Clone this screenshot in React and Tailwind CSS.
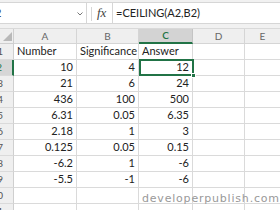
import React from "react";

const rows = [
  ["Number", "Significance", "Answer"],
  ["10", "4", "12"],
  ["21", "6", "24"],
  ["436", "100", "500"],
  ["6.31", "0.05", "6.35"],
  ["2.18", "1", "3"],
  ["0.125", "0.05", "0.15"],
  ["-6.2", "1", "-6"],
  ["-5.5", "-1", "-6"],
  ["", "", ""],
  ["", "", ""],
];

function RowHead({ n }) {
  const sel = n === 2;
  return (
    <div
      className={
        "h-[16px] flex justify-end items-center overflow-hidden pr-[10px] border-b border-[#dadada] text-[10px] " +
        (sel
          ? "bg-[#d6d6d6] text-[#217346] border-r-2 border-r-[#217346]"
          : "bg-[#efefef] text-[#555] border-r border-r-[#cfcfcf]")
      }
    >
      <span className="whitespace-nowrap">{n}</span>
    </div>
  );
}

function Cell({ v, left, w, last }) {
  return (
    <div
      className={
        "h-[16px] flex items-center whitespace-nowrap border-b border-[#dadada] " +
        (last ? "" : "border-r ") +
        (left ? "justify-start pl-[3px] " : "justify-end pr-[3px] ") +
        w
      }
    >
      {v}
    </div>
  );
}

export default function App() {
  return (
    <div
      className="w-[280px] h-[210px] overflow-hidden bg-white text-[#222] relative"
      style={{ fontFamily: "Lato, 'Liberation Sans', sans-serif" }}
    >
      {/* formula bar */}
      <div className="h-[29px] bg-[#f1f1f1] flex items-start pt-[2px] border-b border-[#d9d9d9]">
        <div className="w-[87px] h-[22px] bg-white border border-l-0 border-[#d6d6d6] flex items-center relative overflow-hidden">
          <span className="text-[11px] text-[#333] ml-[-5px]">2</span>
          <svg className="absolute left-[77px] top-[9px]" width="6" height="4" viewBox="0 0 6 4">
            <path d="M0.5 0.5 L3 3 L5.5 0.5" fill="none" stroke="#777" strokeWidth="1" />
          </svg>
        </div>
        <div className="w-[26px] h-[22px] bg-white border-y border-[#d6d6d6] flex items-center relative">
          <div className="absolute left-[4px] top-[4px] w-px h-[14px] bg-[#d6d6d6]" />
          <span
            className="ml-[10px] text-[13px] italic text-[#444]"
            style={{ fontFamily: "'Liberation Serif', serif" }}
          >
            fx
          </span>
          <div className="absolute right-0 top-0 w-px h-full bg-[#d6d6d6]" />
        </div>
        <div className="flex-1 h-[22px] bg-white border-y border-[#d6d6d6] flex items-center pl-[3px] text-[11px] text-[#222]">
          =CEILING(A2,B2)
        </div>
      </div>

      {/* column header */}
      <div className="flex h-[15px] text-[10px] text-[#666]">
        <div className="w-[14px] bg-[#efefef] border-r border-b border-[#cfcfcf] relative">
          <svg className="absolute left-[3px] top-[3px]" width="10" height="10" viewBox="0 0 10 10">
            <path d="M9 0 L9 9 L0 9 Z" fill="#b9b9b9" />
          </svg>
        </div>
        <div className="w-[63px] bg-[#efefef] border-r border-b border-[#d5d5d5] flex items-center justify-center">A</div>
        <div className="w-[62px] bg-[#efefef] border-r border-b border-[#d5d5d5] flex items-center justify-center">B</div>
        <div className="w-[54px] bg-[#d3d3d3] border-r border-[#c4c4c4] border-b-2 border-b-[#217346] flex items-center justify-center text-[#217346] font-semibold">C</div>
        <div className="w-[52px] bg-[#efefef] border-r border-b border-[#d5d5d5] flex items-center justify-center">D</div>
        <div className="flex-1 bg-[#efefef] border-b border-[#d5d5d5] flex items-center justify-center">E</div>
      </div>

      {/* data rows */}
      <div className="text-[11px]">
        {rows.map((r, i) => (
          <div key={i} className="flex">
            <div className="w-[14px]">
              <RowHead n={i + 1} />
            </div>
            <Cell v={r[0]} left={i === 0} w="w-[63px] border-r-[#dadada]" />
            <Cell v={r[1]} left={i === 0} w="w-[62px] border-r-[#dadada]" />
            <Cell v={r[2]} left={i === 0} w="w-[54px] border-r-[#dadada]" />
            <Cell v="" w="w-[52px] border-r-[#dadada]" />
            <Cell v="" w="flex-1" last />
          </div>
        ))}
      </div>

      {/* selected cell C2 */}
      <div className="absolute left-[139px] top-[59px] w-[55px] h-[17px] border-2 border-[#217346]" />
      <div className="absolute left-[191px] top-[73px] w-[5px] h-[5px] bg-[#217346] border border-white" />

      {/* watermark */}
      <div
        className="absolute left-[142px] top-[191px] text-[11px] text-[#999] tracking-[0.8px] whitespace-nowrap"
        style={{ fontFamily: "'DejaVu Sans', sans-serif" }}
      >
        developerpublish.com
      </div>
    </div>
  );
}
